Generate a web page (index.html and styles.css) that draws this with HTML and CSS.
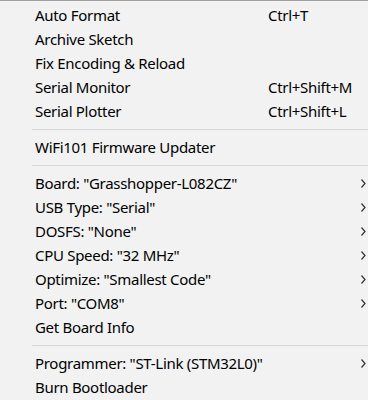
FILE: index.html
```html
<!DOCTYPE html>
<html lang="en">
<head>
  <meta charset="UTF-8">
  <title>Tools menu</title>
  <link rel="stylesheet" href="styles.css">
</head>
<body>

  <div class="menu">
    <div class="item"><span class="label">Auto Format</span><span class="key">Ctrl+T</span></div>
    <div class="item"><span class="label">Archive Sketch</span></div>
    <div class="item"><span class="label">Fix Encoding &amp; Reload</span></div>
    <div class="item"><span class="label">Serial Monitor</span><span class="key">Ctrl+Shift+M</span></div>
    <div class="item"><span class="label">Serial Plotter</span><span class="key">Ctrl+Shift+L</span></div>

    <div class="sep"></div>
    <div class="item"><span class="label">WiFi101 Firmware Updater</span></div>

    <div class="sep"></div>
    <div class="item"><span class="label">Board: "Grasshopper-L082CZ"</span><span class="arrow"><svg width="5" height="9" viewBox="0 0 5 9"><path d="M0.5 0.5 L4 4.5 L0.5 8.5" fill="none" stroke="#333" stroke-width="1.2"/></svg></span></div>
    <div class="item"><span class="label">USB Type: "Serial"</span><span class="arrow"><svg width="5" height="9" viewBox="0 0 5 9"><path d="M0.5 0.5 L4 4.5 L0.5 8.5" fill="none" stroke="#333" stroke-width="1.2"/></svg></span></div>
    <div class="item"><span class="label">DOSFS: "None"</span><span class="arrow"><svg width="5" height="9" viewBox="0 0 5 9"><path d="M0.5 0.5 L4 4.5 L0.5 8.5" fill="none" stroke="#333" stroke-width="1.2"/></svg></span></div>
    <div class="item"><span class="label">CPU Speed: "32 MHz"</span><span class="arrow"><svg width="5" height="9" viewBox="0 0 5 9"><path d="M0.5 0.5 L4 4.5 L0.5 8.5" fill="none" stroke="#333" stroke-width="1.2"/></svg></span></div>
    <div class="item"><span class="label">Optimize: "Smallest Code"</span><span class="arrow"><svg width="5" height="9" viewBox="0 0 5 9"><path d="M0.5 0.5 L4 4.5 L0.5 8.5" fill="none" stroke="#333" stroke-width="1.2"/></svg></span></div>
    <div class="item"><span class="label">Port: "COM8"</span><span class="arrow"><svg width="5" height="9" viewBox="0 0 5 9"><path d="M0.5 0.5 L4 4.5 L0.5 8.5" fill="none" stroke="#333" stroke-width="1.2"/></svg></span></div>
    <div class="item"><span class="label">Get Board Info</span></div>

    <div class="sep"></div>
    <div class="item"><span class="label">Programmer: "ST-Link (STM32L0)"</span><span class="arrow"><svg width="5" height="9" viewBox="0 0 5 9"><path d="M0.5 0.5 L4 4.5 L0.5 8.5" fill="none" stroke="#333" stroke-width="1.2"/></svg></span></div>
    <div class="item"><span class="label">Burn Bootloader</span></div>
  </div>

</body>
</html>
```

FILE: styles.css
```css
body {
  margin: 0;
  background: #f2f2f2;
  font-family: "Segoe UI", "Noto Sans", sans-serif;
  font-size: 15px;
  letter-spacing: -0.3px;
  color: #000;
}

.menu {
  border-top: 1px solid #a0a0a0;
  padding-top: 3px;
  background: #f2f2f2;
}

.item {
  display: grid;
  grid-template-columns: 35px 233px 90px 10px;
  align-items: center;
  box-sizing: border-box;
  height: 24px;
  padding-bottom: 2px;
  white-space: nowrap;
}

.label {
  grid-column: 2;
}

.key {
  grid-column: 3;
}

.arrow {
  grid-column: 4;
  display: flex;
  padding-left: 3px;
  padding-top: 1px;
}

.sep {
  height: 1px;
  margin: 5px 0 6px 32px;
  background: #d7d7d7;
}
```
